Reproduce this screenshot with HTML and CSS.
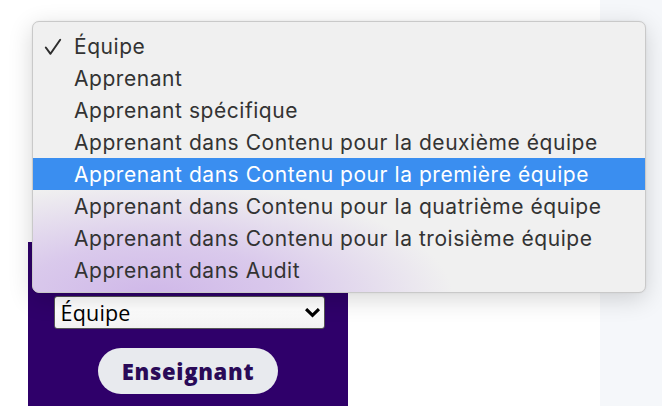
FILE: index.html
```html
<!DOCTYPE html>
<html lang="fr">
<head>
<meta charset="utf-8">
<link rel="stylesheet" href="styles.css">
</head>
<body>
<div class="page">
  <div class="main">
    <div class="panel">
      <div class="select">
        <span class="select-text">Équipe</span>
        <svg class="chev" width="15" height="10" viewBox="0 0 15 10"><path d="M2.2 2.2 L7.5 7.3 L12.8 2.2" fill="none" stroke="#000" stroke-width="3.2" stroke-linecap="square"/></svg>
      </div>
      <button class="btn">Enseignant</button>
    </div>
  </div>
  <div class="side"></div>
</div>
<div class="menu">
  <div class="item"><svg class="check" width="18" height="18" viewBox="0 0 18 18"><path d="M1.8 9.5 L6.5 15.8 L16.2 1.8" fill="none" stroke="#2e2e2e" stroke-width="2" stroke-linecap="round" stroke-linejoin="round"/></svg>Équipe</div>
  <div class="item">Apprenant</div>
  <div class="item">Apprenant spécifique</div>
  <div class="item">Apprenant dans Contenu pour la deuxième équipe</div>
  <div class="item active">Apprenant dans Contenu pour la première équipe</div>
  <div class="item">Apprenant dans Contenu pour la quatrième équipe</div>
  <div class="item">Apprenant dans Contenu pour la troisième équipe</div>
  <div class="item">Apprenant dans Audit</div>
</div>
</body>
</html>
```
FILE: styles.css
```css
html, body {
  margin: 0;
  padding: 0;
  height: 100%;
}
body {
  background: #ffffff;
  overflow: hidden;
}
.page {
  display: flex;
  height: 406px;
}
.main {
  width: 600px;
  background: #ffffff;
  display: flex;
  flex-direction: column;
}
.side {
  flex: 1;
  background: #f5f7fa;
}
.panel {
  margin-left: 28px;
  margin-top: 242px;
  width: 320px;
  flex: 1;
  background: #2f006a;
  display: flex;
  flex-direction: column;
  align-items: center;
  padding-top: 54px;
  box-sizing: border-box;
}
.select {
  width: 271px;
  height: 33px;
  box-sizing: border-box;
  border: 1px solid #555;
  border-radius: 3px;
  background: linear-gradient(#ffffff 40%, #f1f1f1);
  display: flex;
  align-items: center;
  justify-content: space-between;
  padding: 0 3px 0 6px;
  margin-left: 2px;
}
.select-text {
  font-family: "Open Sans", sans-serif;
  font-size: 21.5px;
  color: #000;
  line-height: 1;
  letter-spacing: 0.2px;
}
.chev {
  margin-right: 1px;
}
.btn {
  margin-top: 19px;
  width: 180px;
  height: 46px;
  border: none;
  border-radius: 23px;
  background: #e8eaee;
  font-family: "Open Sans", sans-serif;
  font-weight: 800;
  font-size: 22px;
  color: #2a0a58;
  padding: 0;
  letter-spacing: 0.7px;
}
.menu {
  position: absolute;
  left: 32px;
  top: 21px;
  width: 614px;
  height: 272px;
  box-sizing: border-box;
  border-radius: 7px;
  border: 1px solid #c9c9c9;
  background:
    radial-gradient(ellipse 300px 115px at 120px 275px, rgba(205,180,232,0.95) 0%, rgba(210,188,234,0.75) 45%, rgba(240,240,240,0) 100%),
    #f0f0f0;
  box-shadow: 0 6px 24px rgba(0,0,0,0.16), 0 0 2px rgba(0,0,0,0.08);
  padding-top: 8px;
  overflow: hidden;
}
.item {
  height: 32px;
  display: flex;
  align-items: center;
  padding-left: 41px;
  position: relative;
  font-family: "Inter", sans-serif;
  font-size: 21px;
  color: #333333;
  letter-spacing: 0.55px;
}
.item.active {
  background: #3a8ef0;
  color: #ffffff;
}
.check {
  position: absolute;
  left: 11px;
  top: 8px;
}
```
